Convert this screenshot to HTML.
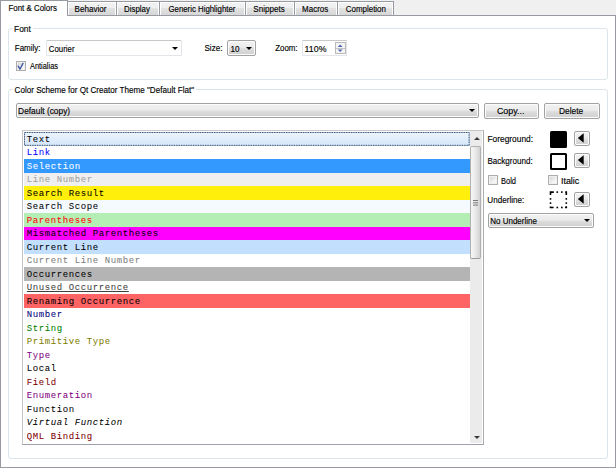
<!DOCTYPE html>
<html><head><meta charset="utf-8">
<style>
html,body{margin:0;padding:0;}
body{width:616px;height:468px;position:relative;overflow:hidden;background:#f0f0f0;font-family:"Liberation Sans",sans-serif;font-size:9.5px;color:#000;}
.a{position:absolute;}
.t{position:absolute;white-space:nowrap;line-height:12px;transform-origin:0 0;-webkit-text-stroke:0.15px #000;}
.pane{left:0;top:15px;width:614px;height:451px;border:1px solid #979aa1;background:#fff;}
.tab{top:1px;height:14px;border:1px solid #979aa1;border-bottom:none;box-sizing:border-box;background:linear-gradient(#f2f2f2 0,#efefef 45%,#e2e2e2 50%,#d6d6d6 100%);box-shadow:inset 1px 1px 0 #fff, inset -1px 0 0 #fff;}
.tabsel{left:0;top:0;width:68px;height:16px;border:1px solid #979aa1;border-bottom:none;box-sizing:border-box;background:#fff;}
.gb{border:1px solid #dde5ea;border-radius:3px;}
.btn{border:1px solid #a2a2a2;border-radius:2px;box-sizing:border-box;background:linear-gradient(#f2f2f2 0,#ebebeb 45%,#dddddd 55%,#cfcfcf 100%);box-shadow:inset 0 0 0 1px #fcfcfc;}
.cb{width:10px;height:10px;box-sizing:border-box;border:1px solid #adadad;background:linear-gradient(135deg,#cfcfcf,#f4f4f4 65%,#fafafa);box-shadow:inset 0 0 0 1px #f0f0f0;}
.row{position:absolute;left:24px;width:445.5px;height:13.5px;}
.rt{position:absolute;left:2px;top:1.5px;transform:translateX(0.8px);line-height:13.5px;white-space:nowrap;font-family:"Liberation Mono",monospace;font-size:9px;letter-spacing:0.6px;-webkit-text-stroke:0.05px currentColor;}
.tri-d{width:0;height:0;border-left:3px solid transparent;border-right:3px solid transparent;border-top:3px solid #000;}
</style></head><body>
<div class="a pane"></div>
<div class="a tab" style="left:67px;width:50px;"></div>
<div class="a tab" style="left:116px;width:44px;"></div>
<div class="a tab" style="left:159px;width:87px;"></div>
<div class="a tab" style="left:245px;width:50px;"></div>
<div class="a tab" style="left:294px;width:44px;"></div>
<div class="a tab" style="left:337px;width:57px;"></div>
<div class="a tabsel"></div>
<div class="a" style="left:1px;top:15px;width:66px;height:1px;background:#fff;"></div>
<div class="t" style="left:0;top:2px;transform:translate(8.47px,0) scaleX(0.833);">Font &amp; Colors</div>
<div class="t" style="left:0;top:3px;transform:translate(74.55px,0) scaleX(0.851);">Behavior</div>
<div class="t" style="left:0;top:3px;transform:translate(123.97px,0) scaleX(0.834);">Display</div>
<div class="t" style="left:0;top:3px;transform:translate(168.44px,0) scaleX(0.824);">Generic Highlighter</div>
<div class="t" style="left:0;top:3px;transform:translate(253.36px,0) scaleX(0.848);">Snippets</div>
<div class="t" style="left:0;top:3px;transform:translate(302.06px,0) scaleX(0.841);">Macros</div>
<div class="t" style="left:0;top:3px;transform:translate(345.74px,0) scaleX(0.837);">Completion</div>

<div class="a gb" style="left:8px;top:28px;width:598px;height:50px;"></div>
<div class="a" style="left:13px;top:26px;width:20px;height:5px;background:#fff;"></div>
<div class="t" style="left:0;top:23px;transform:translate(14.02px,0) scaleX(0.881);">Font</div>
<div class="t" style="left:0;top:42px;transform:translate(14.76px,0) scaleX(0.844);">Family:</div>
<div class="a" style="left:46px;top:40px;width:135.5px;height:15.5px;box-sizing:border-box;border:1px solid #e2e6ea;border-top-color:#c9c9c9;background:#fff;border-radius:1.5px;"></div>
<div class="t" style="left:0;top:43px;transform:translate(48.85px,0) scaleX(0.825);">Courier</div>
<div class="a tri-d" style="left:172px;top:47px;"></div>
<div class="t" style="left:0;top:42px;transform:translate(204.45px,0) scaleX(0.850);">Size:</div>
<div class="a btn" style="left:227px;top:40px;width:29px;height:16px;"></div>
<div class="t" style="left:0;top:43px;transform:translate(230.43px,0) scaleX(0.856);">10</div>
<div class="a tri-d" style="left:246px;top:46.5px;"></div>
<div class="t" style="left:0;top:42px;transform:translate(275.18px,0) scaleX(0.830);">Zoom:</div>
<div class="a" style="left:302px;top:40px;width:45px;height:16px;box-sizing:border-box;border:1px solid #e2e6ea;border-top-color:#c9c9c9;background:#fff;"></div>
<div class="t" style="left:0;top:43px;transform:translate(304.62px,0) scaleX(0.929);">110%</div>
<div class="a" style="left:335px;top:42px;width:11px;height:12px;box-sizing:border-box;border:1px solid #b9b9b9;background:#f4f4f4;"></div>
<div class="a" style="left:336px;top:47.5px;width:9px;height:1px;background:#c4c4c4;"></div>
<svg class="a" style="left:330px;top:40px;" width="20" height="16" viewBox="0 0 20 16"><polygon points="7.8,6.9 12.6,6.9 10.2,4.5" fill="#4862b0"/><polygon points="7.8,9.6 12.6,9.6 10.2,12.0" fill="#4862b0"/></svg>

<div class="a cb" style="left:16px;top:61px;"></div>
<svg class="a" style="left:16px;top:61px;" width="10" height="10" viewBox="0 0 10 10"><path d="M2.2 5.2 L4.0 8.2 L7.0 2.4" fill="none" stroke="#4254a4" stroke-width="1.35" stroke-linejoin="round" stroke-linecap="round"/></svg>
<div class="t" style="left:0;top:60px;transform:translate(29.93px,0) scaleX(0.781);">Antialias</div>

<div class="a gb" style="left:8px;top:89px;width:598px;height:368px;"></div>
<div class="a" style="left:13px;top:87px;width:182.5px;height:5px;background:#fff;"></div>
<div class="t" style="left:0;top:84px;transform:translate(14.59px,0) scaleX(0.851);">Color Scheme for Qt Creator Theme "Default Flat"</div>
<div class="a btn" style="left:16px;top:103px;width:463px;height:15px;"></div>
<div class="t" style="left:0;top:105px;transform:translate(18.12px,0) scaleX(0.879);">Default (copy)</div>
<div class="a tri-d" style="left:469px;top:108.5px;"></div>
<div class="a btn" style="left:484px;top:103px;width:55px;height:16px;"></div>
<div class="t" style="left:0;top:105px;transform:translate(496.91px,0) scaleX(0.936);">Copy...</div>
<div class="a btn" style="left:544px;top:103px;width:56px;height:16px;"></div>
<div class="t" style="left:0;top:105px;transform:translate(558.92px,0) scaleX(0.882);">Delete</div>

<div class="a" style="left:22px;top:130px;width:462px;height:315px;box-sizing:border-box;border:1px solid #c4c6ca;border-bottom-color:#9ea2a8;border-right-color:#a9acb1;background:#fff;overflow:hidden;"></div>
<div class="row" style="top:132.0px;background:linear-gradient(#eef5fd,#d3e5fa);box-shadow:inset 0 0 0 1px #a9c6e8;"><div class="rt" style="color:#000">Text</div></div>
<div class="row" style="top:145.5px;"><div class="rt" style="color:#0000ff">Link</div></div>
<div class="row" style="top:159.0px;background:#3399ff;"><div class="rt" style="color:#fff">Selection</div></div>
<div class="row" style="top:172.5px;background:#efefef;"><div class="rt" style="color:#9f9f9f">Line Number</div></div>
<div class="row" style="top:186.0px;background:#ffef0b;"><div class="rt" style="color:#000">Search Result</div></div>
<div class="row" style="top:199.5px;background:#f5faff;"><div class="rt" style="color:#000">Search Scope</div></div>
<div class="row" style="top:213.0px;background:#b4eeb4;"><div class="rt" style="color:#ff0000">Parentheses</div></div>
<div class="row" style="top:226.5px;background:#ff00ff;"><div class="rt" style="color:#000">Mismatched Parentheses</div></div>
<div class="row" style="top:240.0px;background:#c2dffd;"><div class="rt" style="color:#000">Current Line</div></div>
<div class="row" style="top:253.5px;"><div class="rt" style="color:#808080">Current Line Number</div></div>
<div class="row" style="top:267.0px;background:#b4b4b4;"><div class="rt" style="color:#000">Occurrences</div></div>
<div class="row" style="top:280.5px;"><div class="rt" style="color:#404040;text-decoration:underline">Unused Occurrence</div></div>
<div class="row" style="top:294.0px;background:#ff6464;"><div class="rt" style="color:#000">Renaming Occurrence</div></div>
<div class="row" style="top:307.5px;"><div class="rt" style="color:#000080">Number</div></div>
<div class="row" style="top:321.0px;"><div class="rt" style="color:#008000">String</div></div>
<div class="row" style="top:334.5px;"><div class="rt" style="color:#808000">Primitive Type</div></div>
<div class="row" style="top:348.0px;"><div class="rt" style="color:#800080">Type</div></div>
<div class="row" style="top:361.5px;"><div class="rt" style="color:#000">Local</div></div>
<div class="row" style="top:375.0px;"><div class="rt" style="color:#800000">Field</div></div>
<div class="row" style="top:388.5px;"><div class="rt" style="color:#800080">Enumeration</div></div>
<div class="row" style="top:402.0px;"><div class="rt" style="color:#000">Function</div></div>
<div class="row" style="top:415.5px;"><div class="rt" style="color:#000;font-style:italic">Virtual Function</div></div>
<div class="row" style="top:429.0px;"><div class="rt" style="color:#800000">QML Binding</div></div>
<svg class="a" style="left:24px;top:132px;" width="446" height="14" viewBox="0 0 446 14"><rect x="0.5" y="0.5" width="444.5" height="12.8" fill="none" stroke="#3a4556" stroke-width="1" stroke-dasharray="1.3 1.1" opacity="0.85"/></svg>
<div class="a" style="left:470px;top:131px;width:12px;height:312px;background:#ebebeb;"></div>
<div class="a" style="left:473.5px;top:137px;width:0;height:0;border-left:3px solid transparent;border-right:3px solid transparent;border-bottom:3px solid #3a3a3a;"></div>
<div class="a" style="left:473.5px;top:435.5px;width:0;height:0;border-left:3px solid transparent;border-right:3px solid transparent;border-top:3px solid #3a3a3a;"></div>
<div class="a" style="left:470.3px;top:145.5px;width:11.2px;height:113px;box-sizing:border-box;border:1px solid #b0b0b0;border-bottom-color:#9c9c9c;border-radius:2px;background:linear-gradient(90deg,#f6f6f6,#ebebeb 45%,#d2d2d2);"></div>
<div class="a" style="left:473px;top:199.5px;width:5px;height:1px;background:#777;box-shadow:0 2.3px 0 #777,0 4.6px 0 #777;"></div>

<div class="t" style="left:0;top:133px;transform:translate(487.52px,0) scaleX(0.879);">Foreground:</div>
<div class="a" style="left:550px;top:130.5px;width:17px;height:17px;background:#000;border-radius:1.5px;"></div>
<div class="a btn" style="left:574px;top:131px;width:16px;height:15px;"></div>
<svg class="a" style="left:574px;top:131px;" width="16" height="16" viewBox="0 0 16 16"><polygon points="3.8,7.1 9.7,2.2 9.7,11.7" fill="#000"/></svg>
<div class="t" style="left:0;top:155px;transform:translate(487.45px,0) scaleX(0.847);">Background:</div>
<div class="a" style="left:550px;top:152.5px;width:17px;height:17px;box-sizing:border-box;border:2px solid #000;background:#fff;border-radius:1.5px;"></div>
<div class="a btn" style="left:574px;top:153px;width:16px;height:15px;"></div>
<svg class="a" style="left:574px;top:153px;" width="16" height="16" viewBox="0 0 16 16"><polygon points="3.8,7.1 9.7,2.2 9.7,11.7" fill="#000"/></svg>
<div class="a cb" style="left:488px;top:175px;"></div>
<div class="t" style="left:0;top:175px;transform:translate(501.01px,0) scaleX(0.790);">Bold</div>
<div class="a cb" style="left:548px;top:175px;"></div>
<div class="t" style="left:0;top:175px;transform:translate(560.90px,0) scaleX(0.943);">Italic</div>
<div class="t" style="left:0;top:194px;transform:translate(487.34px,0) scaleX(0.853);">Underline:</div>
<svg class="a" style="left:547px;top:189px;" width="23" height="23" viewBox="0 0 23 23"><g fill="none" stroke="#000" stroke-width="1.6"><path d="M3.5 6.0V3.1H6.8"/><path d="M18.2 3.1H19.3V6.0"/><path d="M3.5 17.4V18.5H6.6"/><path d="M18.0 18.5H19.3V17.3"/></g><g fill="#000"><rect x="9.5" y="2.3" width="1.6" height="1.6"/><rect x="14.0" y="2.3" width="1.6" height="1.6"/><rect x="9.5" y="17.7" width="1.6" height="1.6"/><rect x="14.0" y="17.7" width="1.6" height="1.6"/><rect x="2.7" y="9.1" width="1.6" height="1.6"/><rect x="2.7" y="13.3" width="1.6" height="1.6"/><rect x="18.5" y="9.1" width="1.6" height="1.6"/><rect x="18.5" y="13.3" width="1.6" height="1.6"/></g></svg>
<div class="a btn" style="left:574px;top:192px;width:16px;height:15px;"></div>
<svg class="a" style="left:574px;top:192px;" width="16" height="16" viewBox="0 0 16 16"><polygon points="3.8,7.1 9.7,2.2 9.7,11.7" fill="#000"/></svg>
<div class="a btn" style="left:488px;top:213px;width:106px;height:15px;"></div>
<div class="t" style="left:0;top:215px;transform:translate(490.26px,0) scaleX(0.841);">No Underline</div>
<div class="a tri-d" style="left:584px;top:219px;"></div>
</body></html>
